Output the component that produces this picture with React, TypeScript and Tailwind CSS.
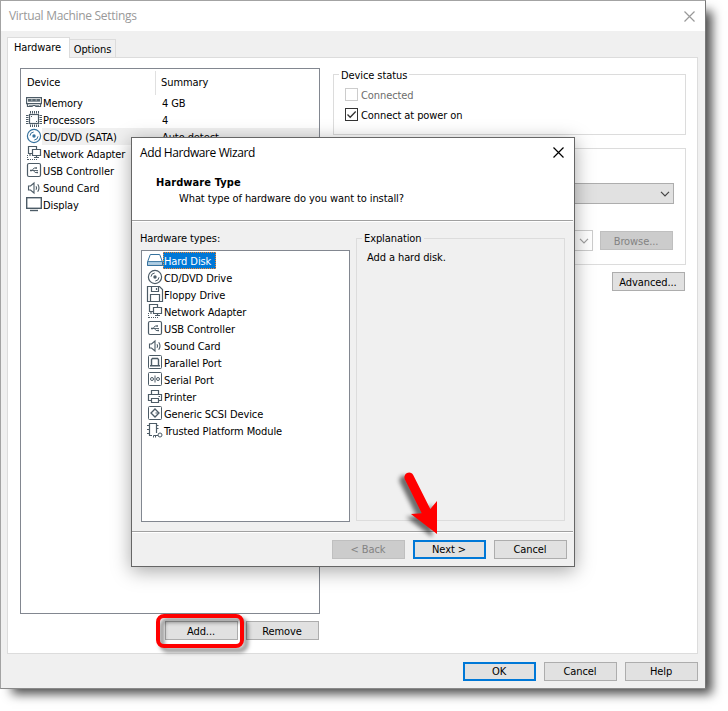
import type { ReactNode } from "react";
import clsx from "clsx";

type IconName =
  | "memory"
  | "cpu"
  | "disc"
  | "network"
  | "usb"
  | "sound"
  | "display"
  | "disk"
  | "floppy"
  | "parallel"
  | "serial"
  | "printer"
  | "scsi"
  | "tpm";

const frame = <rect x="1.5" y="1.5" width="13" height="13" rx="1" />;

const icons: Record<IconName, ReactNode> = {
  memory: (
    <>
      <path d="M.6 3.6h14.8v6H.6zM1.5 9.5v3H6l1-1h2l1 1h4.5v-3" strokeWidth="1.2" />
      <path d="M2 6.5h12" stroke="#8d989f" strokeWidth="3" />
      <path d="M2 6h3M6.5 6h3M11 6h3" strokeWidth="1.6" />
      <path d="M3 11.5h3M10 11.5h3" stroke="#8d989f" />
    </>
  ),
  cpu: (
    <>
      <rect x="3.5" y="3.5" width="9" height="9" strokeWidth="1.2" />
      <path d="M4.5 0v2.5M6.5 0v2.5M8.5 0v2.5M10.5 0v2.5M12.5 0v2.5M4.5 13.5V16M6.5 13.5V16M8.5 13.5V16M10.5 13.5V16M12.5 13.5V16M0 4.5h2.5M0 6.5h2.5M0 8.5h2.5M0 10.5h2.5M0 12.5h2.5M13.5 4.5H16M13.5 6.5H16M13.5 8.5H16M13.5 10.5H16M13.5 12.5H16M5 5.5h1M10 10.5h1" />
    </>
  ),
  disc: (
    <>
      <circle cx="8" cy="8" r="6.6" strokeWidth="1.2" />
      <circle cx="8" cy="8" r="1.7" fill="currentColor" stroke="none" />
      <path d="M4 7.7A4 4 0 0 1 7.7 4M12 8.3A4 4 0 0 1 8.3 12" />
    </>
  ),
  network: (
    <>
      <path
        d="M6 8.5H2.5v-7h8V4M4 11V8.5M6.5 4.5h8v6h-8zM8 12.5h5M10.5 10.5v2"
        strokeWidth="1.2"
      />
      <path d="M1.5 10v5M2 14.5h9" strokeDasharray="1 1" />
    </>
  ),
  usb: (
    <>
      <rect x="1.5" y="1.5" width="13" height="13" rx="1.5" strokeWidth="1.2" />
      <path d="M4 8.5h8M6 8.5L8 6h2M7.5 8.5L9 10.5h2" strokeWidth=".9" />
      <path d="M4 8.5h2M9.5 6h1.5M10.5 10.5H12" strokeWidth="1.6" />
    </>
  ),
  sound: (
    <path
      d="M2.5 7v4h2l3.5 3V4L4.5 7zM10 7.3q1.2 1.7 0 3.4M11.7 5.3q2.6 3.7 0 7.4"
      strokeWidth="1.1"
    />
  ),
  display: (
    <>
      <rect x=".7" y="1.7" width="14.6" height="10.6" strokeWidth="1.4" />
      <path d="M4 14.5h8" strokeWidth="1.4" />
    </>
  ),
  disk: (
    <>
      <path d="M3.3 2.5h9.4L15.5 10v3.5H.5V10z" fill="#fff" />
      <path d="M1 9.7h14" strokeWidth="1.2" />
      <path d="M1 11h14" stroke="#9cc3e0" strokeWidth="1.6" />
      <path d="M.5 13.3h15" strokeWidth="1.4" />
    </>
  ),
  floppy: (
    <>
      <path d="M.5.5h12l3 3v12H.5z" strokeWidth="1.2" />
      <path d="M4.5.5v5h7v-5M9.5 2v2M3.5 15.5v-7h9v7" strokeWidth="1.2" />
    </>
  ),
  parallel: (
    <>
      {frame}
      <path d="M4.5 12V5.5l1-1h5l1 1V12M3 11.7h10" strokeWidth="1.4" />
    </>
  ),
  serial: (
    <>
      {frame}
      <circle cx="5" cy="8" r="1.5" />
      <circle cx="11" cy="8" r="1.5" />
      <path d="M8 4.5v7" />
    </>
  ),
  printer: (
    <>
      <path
        d="M4.5 6.5v-4h7v4M4.5 12.5h-3v-6h13v6h-3M4.5 10.5h7v4h-7z"
        strokeWidth="1.2"
      />
      <path d="M11.5 8.5h1.5" />
    </>
  ),
  scsi: (
    <>
      {frame}
      <path d="M8 4l4 4-4 4-4-4z" strokeWidth="1.3" />
      <path d="M8.5 8H11" />
    </>
  ),
  tpm: (
    <>
      <path
        d="M5 13.5H2.5v-12h7V11M0 3.5h2M0 7.5h2M0 11.5h2M9.5 3.5h2M9.5 6.5h2"
        strokeWidth="1.2"
      />
      <circle cx="13" cy="13" r="2" />
      <path d="M11 13.5H6.5v2M8.5 13.5v2" />
    </>
  ),
};

const Icon = ({ name, blue }: { name: IconName; blue?: boolean }) => (
  <svg
    viewBox="0 0 16 17"
    className={clsx(
      "h-[17px] w-4 shrink-0 overflow-visible",
      blue ? "text-[#36729e]" : "text-[#4c5b66]"
    )}
    fill="none"
    stroke="currentColor"
  >
    {icons[name]}
  </svg>
);

const Button = ({
  children,
  variant = "normal",
  className,
}: {
  children: ReactNode;
  variant?: "normal" | "primary" | "disabled";
  className?: string;
}) => (
  <button
    className={clsx(
      "flex h-[19px] w-[73px] shrink-0 items-center justify-center pr-px",
      variant === "normal" && "border border-[#adadad] bg-[#e1e1e1]",
      variant === "primary" && "border-2 border-[#0078d7] bg-[#e1e1e1]",
      variant === "disabled" &&
        "border border-[#bfbfbf] bg-[#cccccc] text-[#838383]",
      className
    )}
  >
    {children}
  </button>
);

const Chevron = ({ className }: { className?: string }) => (
  <svg viewBox="0 0 10 6" className={clsx("h-1.5 w-2.5", className)} fill="none">
    <path d="M1 .8l4 4 4-4" stroke="currentColor" strokeWidth="1.2" />
  </svg>
);

const CloseIcon = () => (
  <svg viewBox="0 0 11 11" className="size-[11px]">
    <path
      d="M.5.5l10 10M10.5.5l-10 10"
      stroke="currentColor"
      strokeWidth="1.2"
    />
  </svg>
);

const devices: { icon: IconName; name: string; summary?: string }[] = [
  { icon: "memory", name: "Memory", summary: "4 GB" },
  { icon: "cpu", name: "Processors", summary: "4" },
  { icon: "disc", name: "CD/DVD (SATA)", summary: "Auto detect" },
  { icon: "network", name: "Network Adapter" },
  { icon: "usb", name: "USB Controller" },
  { icon: "sound", name: "Sound Card" },
  { icon: "display", name: "Display" },
];

const hardwareTypes: { icon: IconName; name: string }[] = [
  { icon: "disk", name: "Hard Disk" },
  { icon: "disc", name: "CD/DVD Drive" },
  { icon: "floppy", name: "Floppy Drive" },
  { icon: "network", name: "Network Adapter" },
  { icon: "usb", name: "USB Controller" },
  { icon: "sound", name: "Sound Card" },
  { icon: "parallel", name: "Parallel Port" },
  { icon: "serial", name: "Serial Port" },
  { icon: "printer", name: "Printer" },
  { icon: "scsi", name: "Generic SCSI Device" },
  { icon: "tpm", name: "Trusted Platform Module" },
];

const DeviceList = () => (
  <div className="h-[546px] w-[300px] border border-[#828790] bg-white">
    <div className="flex h-[25px] items-center">
      <div className="mt-0.5 flex h-6 w-[135px] items-center border-r border-[#e0e0e0] pl-1.5">
        Device
      </div>
      <div className="pt-0.5 pl-[5px]">Summary</div>
    </div>
    {devices.map((d) => {
      const selected = d.name === "CD/DVD (SATA)";
      return (
        <div key={d.name} className="flex h-[17px] pl-[5px]">
          <Icon name={d.icon} blue={selected} />
          <div
            className={clsx(
              "flex flex-1 items-center pt-0.5 pl-px",
              selected && "bg-[#f0f0f0]"
            )}
          >
            <span className="w-[119px]">{d.name}</span>
            <span>{d.summary}</span>
          </div>
        </div>
      );
    })}
  </div>
);

const DeviceStatus = () => (
  <fieldset className="h-[67px] w-[353px] border border-[#dcdcdc] pl-[11px]">
    <legend className="-ml-1.5 h-3 px-[2px] leading-[15px]">
      Device status
    </legend>
    <label className="mt-2 flex h-[13px] items-center text-[#6d6d6d]">
      <span className="mr-[3px] size-[13px] border border-[#cccccc] bg-white" />
      <span className="pt-px">Connected</span>
    </label>
    <label className="mt-[7px] flex h-[13px] items-center">
      <span className="mr-[3px] size-[13px] border border-[#333333] bg-white">
        <svg viewBox="0 0 11 11" className="size-[11px]" fill="none">
          <path d="M1.5 5.5l2.7 2.8L9.7 2.5" stroke="#333" strokeWidth="1.3" />
        </svg>
      </span>
      <span className="pt-px">Connect at power on</span>
    </label>
  </fieldset>
);

const ConnectionGroup = () => (
  <div className="mt-[13px] h-[117px] w-[353px] border border-[#dcdcdc] pt-[34px] pr-[11px]">
    <div className="ml-auto flex h-[21px] w-[300px] items-center justify-end border border-[#adadad] bg-[#e1e1e1] pr-[3px]">
      <Chevron className="text-[#444]" />
    </div>
    <div className="mt-[26px] mr-px flex justify-end gap-[7px]">
      <div className="flex h-[21px] w-[220px] items-center justify-end border border-[#cccccc] pr-[3px]">
        <Chevron className="text-[#a0a0a0]" />
      </div>
      <Button variant="disabled" className="mt-px h-5 pt-px">
        Browse...
      </Button>
    </div>
  </div>
);

const RedArrow = () => (
  <svg
    viewBox="0 0 50 76"
    className="absolute top-[465px] left-[395px] h-[76px] w-[50px] overflow-visible drop-shadow-[-5px_3px_2px_rgba(0,0,0,0.55)]"
  >
    <path
      d="M9.8 14.2A4.7 4.7 0 0 1 18.2 10L35.3 44 42 36V69L16 49l10.7-.7z"
      fill="#ff0000"
    />
  </svg>
);

const AddHardwareWizard = () => (
  <div className="absolute top-[137px] left-[131px] flex h-[430px] w-[444px] flex-col border border-[#666666] bg-[#f0f0f0] shadow-[0_4px_18px_rgba(0,0,0,0.35)]">
    <div className="h-[82px] shrink-0 bg-white pl-2">
      <div className="flex h-[29px] items-center justify-between pr-2.5 font-['Open_Sans',sans-serif] text-[12px]">
        <span className="pt-px tracking-[-0.4px]">Add Hardware Wizard</span>
        <CloseIcon />
      </div>
      <div className="mt-2 ml-4 font-bold leading-4 tracking-[0.1px]">
        Hardware Type
      </div>
      <div className="ml-[39px] leading-4">
        What type of hardware do you want to install?
      </div>
    </div>
    <div className="mr-px h-0.5 shrink-0 border-t border-[#a0a0a0] bg-white" />

    <div className="flex h-[309px] pl-[9px]">
      <div className="w-[209px]">
        <div className="mt-[9px] -ml-px h-5 leading-4">Hardware types:</div>
        <div className="-mt-px h-[272px] border border-[#828790] bg-white pt-px pl-[5px]">
          {hardwareTypes.map((h, i) => (
            <div key={h.name} className="flex h-[17px]">
              <Icon name={h.icon} blue={i === 0} />
              <span
                className={clsx(
                  "flex items-center pt-0.5",
                  i === 0
                    ? "w-[53px] border border-dotted border-[#ff8728] bg-[#0078d7] text-white"
                    : "pl-px"
                )}
              >
                {h.name}
              </span>
            </div>
          ))}
        </div>
      </div>
      <fieldset className="mt-[9px] ml-1.5 h-[290px] w-[209px] border border-[#dcdcdc] pl-[11px]">
        <legend className="-ml-1.5 h-3.5 px-[2px] leading-4">
          Explanation
        </legend>
        <div className="mt-[5px] -ml-px leading-4">Add a hard disk.</div>
      </fieldset>
    </div>

    <div className="mr-px h-0.5 shrink-0 border-t border-[#a0a0a0] bg-white" />
    <div className="flex justify-end gap-2 pt-[7px] pr-[7px]">
      <Button variant="disabled">&lt; Back</Button>
      <Button variant="primary">Next &gt;</Button>
      <Button>Cancel</Button>
    </div>
  </div>
);

export default function App() {
  return (
    <div className="relative h-[711px] w-[728px] overflow-hidden bg-white font-['DejaVu_Sans_Condensed','DejaVu_Sans',sans-serif] text-[11px] leading-none tracking-[-0.09px] whitespace-nowrap text-black">
      {/* drop shadow of the main window */}
      <div className="absolute top-1.5 left-1.5 h-[683px] w-[700px] shadow-[6px_5px_10px_rgba(0,0,0,0.7)]" />

      <div className="relative flex h-[689px] w-[706px] flex-col border border-[#a3a3a3] border-r-[#777777] border-b-[#8a8a8a] bg-[#f0f0f0]">
        <div className="flex h-[30px] shrink-0 items-center justify-between bg-white pr-2.5 pl-2 font-['Open_Sans',sans-serif] text-[12px] text-[#999999]">
          <span className="tracking-[-0.3px]">Virtual Machine Settings</span>
          <CloseIcon />
        </div>

        <div className="mt-1.5 ml-1.5 flex h-5 items-end">
          <div className="relative z-10 -mb-px flex h-[21px] w-[63px] items-center justify-center border border-b-0 border-[#dcdcdc] bg-white pr-0.5 pb-0.5">
            Hardware
          </div>
          <div className="flex h-[18px] w-[46px] items-center justify-center border border-b-0 border-l-0 border-[#dcdcdc] pt-0.5">
            Options
          </div>
        </div>

        <div className="ml-1.5 flex h-[597px] w-[691px] shrink-0 border border-[#dcdcdc] bg-white pt-2.5 pl-3">
          <div>
            <DeviceList />
            <div className="mt-[7px] flex justify-end gap-2">
              <div className="relative">
                <Button className="h-5 pt-px">Add...</Button>
                <div className="absolute -top-[7px] -left-[9px] h-[34px] w-[88px] rounded-lg border-4 border-[#ff0000] drop-shadow-[4px_4px_2px_rgba(0,0,0,0.5)]" />
              </div>
              <Button className="mr-px h-5 pt-px">Remove</Button>
            </div>
          </div>
          <div className="ml-[13px]">
            <DeviceStatus />
            <ConnectionGroup />
            <Button className="mt-[7px] ml-[279px] h-5 pt-px">
              Advanced...
            </Button>
          </div>
        </div>

        <div className="mt-2 flex justify-end gap-2 pr-[7px]">
          <Button variant="primary">OK</Button>
          <Button>Cancel</Button>
          <Button>Help</Button>
        </div>
      </div>

      <AddHardwareWizard />
      <RedArrow />
    </div>
  );
}
